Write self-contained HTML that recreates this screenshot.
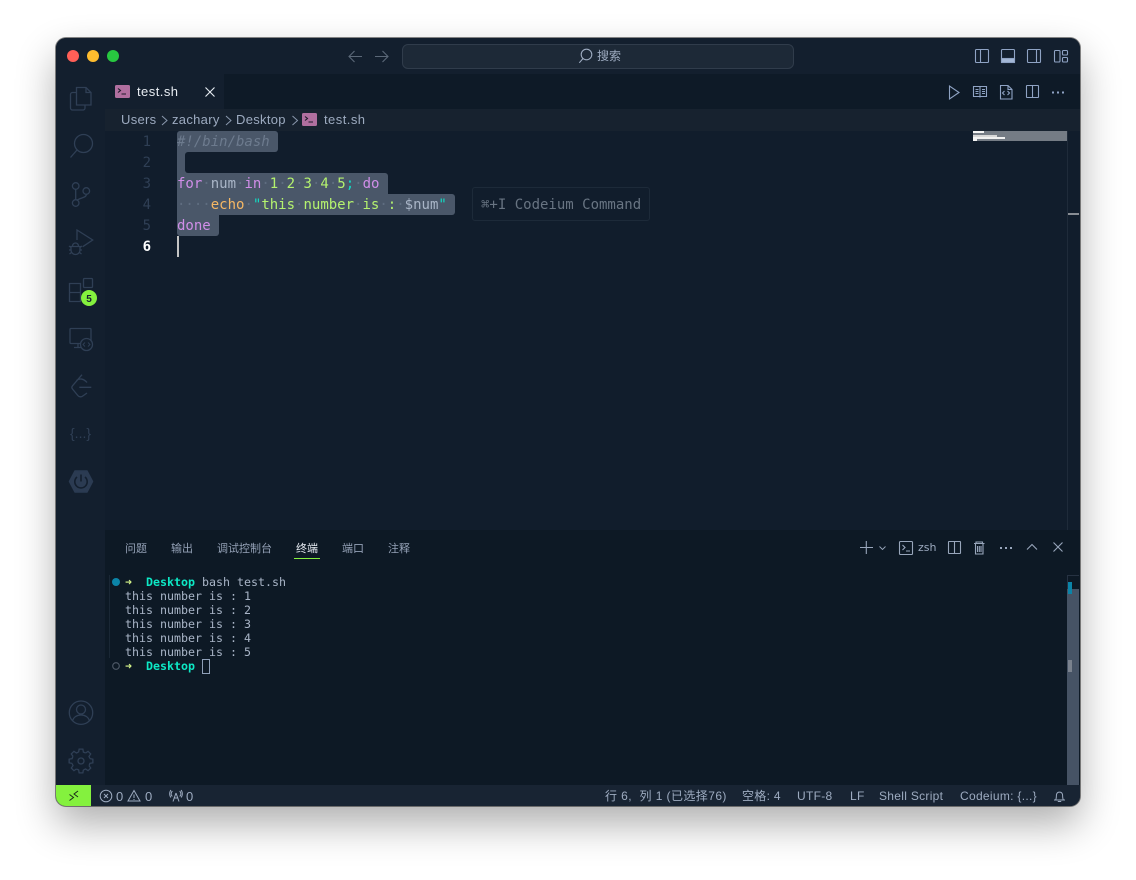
<!DOCTYPE html>
<html lang="zh"><head><meta charset="utf-8"><title>test.sh</title>
<style>
html,body{margin:0;padding:0;width:1136px;height:880px;background:#fff;overflow:hidden}
.a{position:absolute;white-space:pre}
#win{position:absolute;left:56px;top:38px;width:1024px;height:768px;border-radius:10px;background:#111d2c;box-shadow:0 0 0 1px rgba(40,40,40,.55),0 18px 40px rgba(0,0,0,.32)}
.b{position:absolute}
.m{font-family:"DejaVu Sans Mono","Liberation Mono",monospace;font-size:14px;line-height:21px;height:21px;margin-top:1px}
.t{font-family:"DejaVu Sans Mono","Liberation Mono",monospace;font-size:11.63px;line-height:14px;height:14px;color:#a9b5c7;left:125px}
.s{font-family:"Liberation Sans","Noto Sans CJK SC",sans-serif;font-size:12px;line-height:21px;top:786px;color:#9dabc0;letter-spacing:.3px}
.c{font-family:"Liberation Sans","Noto Sans CJK SC",sans-serif;font-size:13px;line-height:22px;top:109px;color:#9dabc0;letter-spacing:.3px}
.p{font-family:"Liberation Sans","Noto Sans CJK SC",sans-serif;font-size:11px;line-height:16px;top:541px;color:#94a1b6}
.sel{position:absolute;background:#4a5769}
.n{color:#2f3f55;text-align:right;left:120px;width:31px}
.k{color:#d08ee8}.w{color:#a9b5c7}.d{color:#5f6d80}.g{color:#b4f26e}.y{color:#f5b764}.q{color:#13d9c2}
</style></head><body>
<div id="win"></div>
<!-- regions -->
<div class="b" style="left:56px;top:38px;width:1024px;height:36px;background:#131f2e;border-radius:10px 10px 0 0"></div>
<div class="b" style="left:56px;top:74px;width:49px;height:711px;background:#131f2e"></div>
<div class="b" style="left:105px;top:74px;width:975px;height:35px;background:#0e1a27"></div>
<div class="b" style="left:105px;top:74px;width:119px;height:35px;background:#131f2e"></div>
<div class="b" style="left:105px;top:109px;width:975px;height:22px;background:#17222f"></div>
<div class="b" style="left:105px;top:530px;width:975px;height:255px;background:#0d1925"></div>
<div class="b" style="left:56px;top:785px;width:1024px;height:21px;background:#182433;border-radius:0 0 10px 10px"></div>
<div class="b" style="left:56px;top:785px;width:35px;height:21px;background:#84f13e;border-radius:0 0 0 10px"></div>
<!-- search box -->
<div class="b" style="left:402px;top:44px;width:390px;height:23px;background:#1d2937;border:1px solid #303c4b;border-radius:6px"></div>
<div class="a" style="left:597px;top:47px;font:12px/18px 'Liberation Sans','Noto Sans CJK SC',sans-serif;color:#9dabc0">搜索</div>
<!-- tab + breadcrumbs -->
<div class="a" style="left:137px;top:83px;font:13px/18px 'Liberation Sans',sans-serif;color:#e8edf3;letter-spacing:.45px">test.sh</div>
<div class="a c" style="left:121px">Users</div>
<div class="a c" style="left:172px">zachary</div>
<div class="a c" style="left:236px">Desktop</div>
<div class="a c" style="left:324px;letter-spacing:.45px">test.sh</div>
<!-- selection -->
<div class="sel" style="left:177px;top:131px;width:101px;height:21px;border-radius:3px 3px 3px 0"></div>
<div class="sel" style="left:177px;top:152px;width:30px;height:21px"></div>
<div class="b" style="left:185px;top:152px;width:40px;height:21px;background:#111d2c;border-radius:3px 0 0 3px"></div>
<div class="sel" style="left:177px;top:173px;width:211px;height:21px;border-radius:0 3px 0 0"></div>
<div class="sel" style="left:177px;top:194px;width:278px;height:21px;border-radius:0 3px 3px 0"></div>
<div class="sel" style="left:177px;top:215px;width:42px;height:21px;border-radius:0 0 3px 3px"></div>
<div class="b" style="left:177px;top:236px;width:2px;height:21px;background:#c4c4c4"></div>
<!-- line numbers -->
<div class="a m n" style="top:131px">1</div>
<div class="a m n" style="top:152px">2</div>
<div class="a m n" style="top:173px">3</div>
<div class="a m n" style="top:194px">4</div>
<div class="a m n" style="top:215px">5</div>
<div class="a m n" style="top:236px;color:#fff;font-weight:bold">6</div>
<!-- code -->
<div class="a m" style="left:177px;top:131px;color:#6d7b8e;font-style:italic">#!/bin/bash</div>
<div class="a m" style="left:177px;top:173px"><span class="k">for</span><span class="d">·</span><span class="w">num</span><span class="d">·</span><span class="k">in</span><span class="d">·</span><span class="g">1</span><span class="d">·</span><span class="g">2</span><span class="d">·</span><span class="g">3</span><span class="d">·</span><span class="g">4</span><span class="d">·</span><span class="g">5</span><span class="q">;</span><span class="d">·</span><span class="k">do</span></div>
<div class="a m" style="left:177px;top:194px"><span class="d">····</span><span class="y">echo</span><span class="d">·</span><span class="q">"</span><span class="g">this</span><span class="d">·</span><span class="g">number</span><span class="d">·</span><span class="g">is</span><span class="d">·</span><span class="g">:</span><span class="d">·</span><span class="w">$num</span><span class="q">"</span></div>
<div class="a m" style="left:177px;top:215px"><span class="k">done</span></div>
<!-- tooltip -->
<div class="b" style="left:472px;top:187px;width:176px;height:32px;border:1px solid #1d2a39;border-radius:3px"></div>
<div class="a m" style="left:481px;top:194px;color:#687482">⌘+I Codeium Command</div>
<!-- minimap -->
<div class="b" style="left:973px;top:131px;width:94px;height:10px;background:#757c85"></div>
<div class="b" style="left:973px;top:131px;width:11px;height:2px;background:#f4f4f4"></div>
<div class="b" style="left:973px;top:135px;width:24px;height:2px;background:#d8d8d8"></div>
<div class="b" style="left:977px;top:137px;width:28px;height:2px;background:#f0f0f0"></div>
<div class="b" style="left:973px;top:137px;width:4px;height:4px;background:#f4f4f4"></div>
<div class="b" style="left:1067px;top:131px;width:1px;height:399px;background:#1f2b3a"></div>
<div class="b" style="left:1068px;top:213px;width:11px;height:2px;background:#888d94"></div>
<!-- panel tabs -->
<div class="a p" style="left:125px">问题</div>
<div class="a p" style="left:171px">输出</div>
<div class="a p" style="left:217px">调试控制台</div>
<div class="a p" style="left:296px;color:#e6ebf2">终端</div>
<div class="a p" style="left:342px">端口</div>
<div class="a p" style="left:388px">注释</div>
<div class="b" style="left:294px;top:558px;width:26px;height:1px;background:#84f13e"></div>
<!-- terminal -->
<div class="b" style="left:109px;top:575px;width:1px;height:83px;background:#1a2735"></div>
<div class="a t" style="top:575px"><span style="color:#d6f58a;font-weight:bold">➜</span>  <b style="color:#0de8c5;font-weight:bold">Desktop</b> bash test.sh</div>
<div class="a t" style="top:589px">this number is : 1</div>
<div class="a t" style="top:603px">this number is : 2</div>
<div class="a t" style="top:617px">this number is : 3</div>
<div class="a t" style="top:631px">this number is : 4</div>
<div class="a t" style="top:645px">this number is : 5</div>
<div class="a t" style="top:659px"><span style="color:#d6f58a;font-weight:bold">➜</span>  <b style="color:#0de8c5;font-weight:bold">Desktop</b></div>
<div class="b" style="left:202px;top:659px;width:6px;height:13px;border:1px solid #8fa0b8"></div>
<div class="a" style="left:918px;top:540px;font:11px/15px 'DejaVu Sans',sans-serif;color:#9dabc0">zsh</div>
<!-- panel scrollbar -->
<div class="b" style="left:1067px;top:575px;width:12px;height:210px;background:#465365"></div>
<div class="b" style="left:1067px;top:575px;width:12px;height:14px;background:#0d1925;box-shadow:inset 1px 1px 0 #263242"></div>
<div class="b" style="left:1068px;top:582px;width:4px;height:12px;background:#0b84a8"></div>
<div class="b" style="left:1068px;top:660px;width:4px;height:12px;background:#7a828e"></div>
<!-- activity text -->
<div class="a" style="left:70px;top:424px;font:14px/18px 'Liberation Sans',sans-serif;color:#2f3f55">{...}</div>
<!-- status -->
<div class="a s" style="left:116px;font-size:13px;letter-spacing:0">0</div>
<div class="a s" style="left:145px;font-size:13px;letter-spacing:0">0</div>
<div class="a s" style="left:186px;font-size:13px;letter-spacing:0">0</div>
<div class="a s" style="left:605px;letter-spacing:.42px">行 6,&nbsp; 列 1 (已选择76)</div>
<div class="a s" style="left:742px">空格: 4</div>
<div class="a s" style="left:797px">UTF-8</div>
<div class="a s" style="left:850px">LF</div>
<div class="a s" style="left:879px">Shell Script</div>
<div class="a s" style="left:960px">Codeium: {...}</div>
<!-- icons -->
<svg class="b" style="left:0;top:0;pointer-events:none" width="1136" height="880" viewBox="0 0 1136 880" fill="none">
<!-- traffic -->
<circle cx="73" cy="56" r="6" fill="#ff5f57"/><circle cx="93" cy="56" r="6" fill="#febc2e"/><circle cx="113" cy="56" r="6" fill="#28c840"/>
<!-- nav -->
<g stroke="#5b6878" stroke-width="1.1"><path d="M362 56.5H349M354.5 51l-5.5 5.5 5.5 5.5"/><path d="M375 56.500H388M382.500 51l5.500 5.500-5.500 5.500"/></g>
<circle cx="586.500" cy="54.500" r="5.300" stroke="#9dabc0" stroke-width="1.100"/><path d="M583 58.500 579.300 62.800" stroke="#9dabc0" stroke-width="1.100"/>
<!-- layout icons -->
<g stroke="#8fa3c4" stroke-width="1.1">
<rect x="975.500" y="49.500" width="13" height="13" rx="1"/><path d="M980.500 49.500v13"/>
<rect x="1001.500" y="49.500" width="13" height="13" rx="1"/><rect x="1001.500" y="58.500" width="13" height="4" fill="#a4b7d6"/>
<rect x="1027.500" y="49.500" width="13" height="13" rx="1"/><path d="M1036.500 49.500v13"/>
<rect x="1054.500" y="50.500" width="5.500" height="11.500" rx="1"/><rect x="1062.500" y="50.500" width="5" height="4.500" rx="1"/><rect x="1062.500" y="57.500" width="5" height="4.500" rx="1"/>
<!-- editor actions -->
<path d="M949.500 86v13l9.500-6.500z"/>
<path d="M973.500 86.500h6l.5 .5.500-.5h6v10h-6l-.5 .5-.5-.5h-6zM980 87v10M975.500 89.500h3M975.500 91.500h3M975.500 93.500h3M982 89.500h3M982 91.500h3M982 93.500h3"/>
<path d="M1000.500 85.500h7.500l4 4v9.500h-11.500zM1008 85.500v4h4M1004.500 91l-2 2 2 2M1007.500 91l2 2-2 2"/>
<rect x="1026.500" y="85.500" width="12" height="12" rx=".5"/><path d="M1032.500 85.500v12"/>
</g>
<g fill="#8fa3c4"><rect x="1052" y="91.500" width="2" height="2"/><rect x="1057" y="91.500" width="2" height="2"/><rect x="1062" y="91.500" width="2" height="2"/></g>
<!-- tab icon -->
<rect x="115" y="85" width="15" height="13" rx="1.500" fill="#b06f9f"/><path d="M118 88.500l2.500 2-2.500 2M121.500 94h4.500" stroke="#1b1a28" stroke-width="1.100"/>
<path d="M205.500 87.500l9 9M214.500 87.500l-9 9" stroke="#e8edf3" stroke-width="1.100"/>
<!-- crumbs -->
<g stroke="#8a98ad" stroke-width="1"><path d="M162 116l5 4.500-5 4.500M226 116l5 4.500-5 4.500M292.500 116l5 4.500-5 4.500"/></g>
<rect x="302" y="113" width="15" height="13" rx="1.500" fill="#b06f9f"/><path d="M305 116.500l2.500 2-2.500 2M308.500 122h4.500" stroke="#1b1a28" stroke-width="1.100"/>
<!-- activity -->
<g stroke="#2f3f55" stroke-width="1.300">
<path d="M76.500 87.500h9.500l5 5v12.500h-14.500z"/><path d="M86 87.500v5h5"/><path d="M76.500 92.500h-4a2 2 0 0 0-2 2v13.500a2 2 0 0 0 2 2h10.500a2 2 0 0 0 2-2v-3"/>
<circle cx="83.500" cy="143.500" r="9"/><path d="M77 150 70.500 157.500"/>
<circle cx="75.700" cy="186" r="3.300"/><circle cx="75.700" cy="203" r="3.300"/><circle cx="86.300" cy="191" r="3.300"/><path d="M75.700 189.500v10M86.300 194.500c0 3.500-6 3-9.500 6"/>
<path d="M77 240V230l15.700 10-10 6.700"/><path d="M71 246.500h9v3.500a4.500 4.500 0 0 1-9 0zM72.500 246a3 3 0 0 1 6 0M71 247.500l-2-1.500M80 247.500l2-1.500M71 250h-2M80 250h2M71.500 252.500l-2 1.500M79.500 252.500l2 1.500"/>
<path d="M69.500 283.500h11v18h-11zM69.500 292.500h11"/><rect x="83.500" y="278.500" width="9" height="9" rx="1"/>
<rect x="70" y="328.500" width="21" height="15" rx="1"/><path d="M74 347.500h8M78 344v3"/>
<circle cx="86.500" cy="344.500" r="6" fill="#131f2e"/><path d="M85 342.500l-2 2 2 2M88 342.500l2 2-2 2" stroke-width=".9"/>
<path d="M82 374.700 72.500 385.800a2.500 2.500 0 0 0 0 3.200l5.300 6.500a3.500 3.500 0 0 0 5 .5l4.200-3M79.300 387.300h12M76.500 380.500c3-2.500 7-2 10.500 2"/>
<circle cx="81" cy="712.700" r="11.700"/><circle cx="81" cy="709.500" r="4.500"/><path d="M72.500 721c1-4 4.500-6 8.500-6s7.500 2 8.500 6"/>
<g transform="translate(81 761)">
<path d="M-2.380-8.890-1.880-11.850H1.880L2.380-8.890A9.200 9.200 0 0 1 4.600-7.970"/>
<path transform="rotate(45)" d="M-2.380-8.890-1.880-11.850H1.880L2.380-8.890A9.200 9.200 0 0 1 4.600-7.970"/>
<path transform="rotate(90)" d="M-2.380-8.890-1.880-11.850H1.880L2.380-8.890A9.200 9.200 0 0 1 4.600-7.970"/>
<path transform="rotate(135)" d="M-2.380-8.890-1.880-11.850H1.880L2.380-8.890A9.200 9.200 0 0 1 4.600-7.970"/>
<path transform="rotate(180)" d="M-2.380-8.890-1.880-11.850H1.880L2.380-8.890A9.200 9.200 0 0 1 4.600-7.970"/>
<path transform="rotate(225)" d="M-2.380-8.890-1.880-11.850H1.880L2.380-8.890A9.200 9.200 0 0 1 4.600-7.970"/>
<path transform="rotate(270)" d="M-2.380-8.890-1.880-11.850H1.880L2.380-8.890A9.200 9.200 0 0 1 4.600-7.970"/>
<path transform="rotate(315)" d="M-2.380-8.890-1.880-11.850H1.880L2.380-8.890A9.200 9.200 0 0 1 4.600-7.970"/>
<circle r="3"/>
</g>
</g>
<path d="M87 471 92.500 481.500 87 492H75L69.500 481.500 75 471z" fill="#2b3b52" stroke="#2b3b52" stroke-width="1.500" stroke-linejoin="round"/>
<path d="M77 477a6.200 6.200 0 1 0 8 0M81 474.500v7" stroke="#131f2e" stroke-width="1.600"/>
<circle cx="89" cy="298" r="8" fill="#84f13e"/>
<text x="89" y="302" text-anchor="middle" font-family="Liberation Sans,sans-serif" font-size="10" font-weight="bold" fill="#15222f">5</text>
<!-- panel actions -->
<g stroke="#98a6bb" stroke-width="1.100">
<path d="M866.300 541v13M860 547.500h13"/><path d="M879.500 546.500l3 3 3-3" stroke-width=".9"/>
<rect x="899.500" y="541.500" width="13" height="13" rx="1"/><path d="M902.500 545l2.500 2.500-2.500 2.500M906 551h4"/>
<rect x="948.500" y="541.500" width="12" height="12" rx=".5"/><path d="M954.500 541.500v12"/>
<path d="M974 543.500h10.500M976 543.500v-1.500h6.500v1.500M975.500 543.500v10.500h7.500v-10.500M977.500 546v6M979.300 546v6M981 546v6"/>
<path d="M1027 549.500l5-5 5 5M1053.500 542.500l9 9M1062.500 542.500l-9 9"/>
</g>
<g fill="#98a6bb"><rect x="1000" y="547" width="2" height="2"/><rect x="1005" y="547" width="2" height="2"/><rect x="1010" y="547" width="2" height="2"/></g>
<!-- terminal decorations -->
<circle cx="116" cy="582" r="4" fill="#0b84a8"/><circle cx="116" cy="666" r="3.300" stroke="#4f5a68" stroke-width="1.100"/>
<!-- status icons -->
<path d="M69.500 794.500l4 3-4 3M78 791l-4 3 4 3" stroke="#1a2b1a" stroke-width="1"/>
<g stroke="#9dabc0" stroke-width="1">
<circle cx="106" cy="796" r="5.800"/><path d="M104 794l4 4M108 794l-4 4"/>
<path d="M134 790.500l6 10.500h-12zM134 794.500v3.500M134 799v1"/>
<path d="M176 793l-3 8.500M176 793l3 8.500M173.700 798h4.600M172.300 791c-1.500 1.800-1.500 4 0 5.500M179.700 791c1.500 1.800 1.500 4 0 5.500M170.800 790c-1.500 2.500-1.500 5 0 7.500M181.200 790c1.500 2.500 1.500 5 0 7.500"/>
<path d="M1054 800h11M1055.500 800c1.200-1.500 .700-3.500 1-5.500a3.100 3.100 0 0 1 6 0c.300 2-.200 4 1 5.500M1057.800 801.500h3.400"/>
</g>
</svg>
</body></html>
